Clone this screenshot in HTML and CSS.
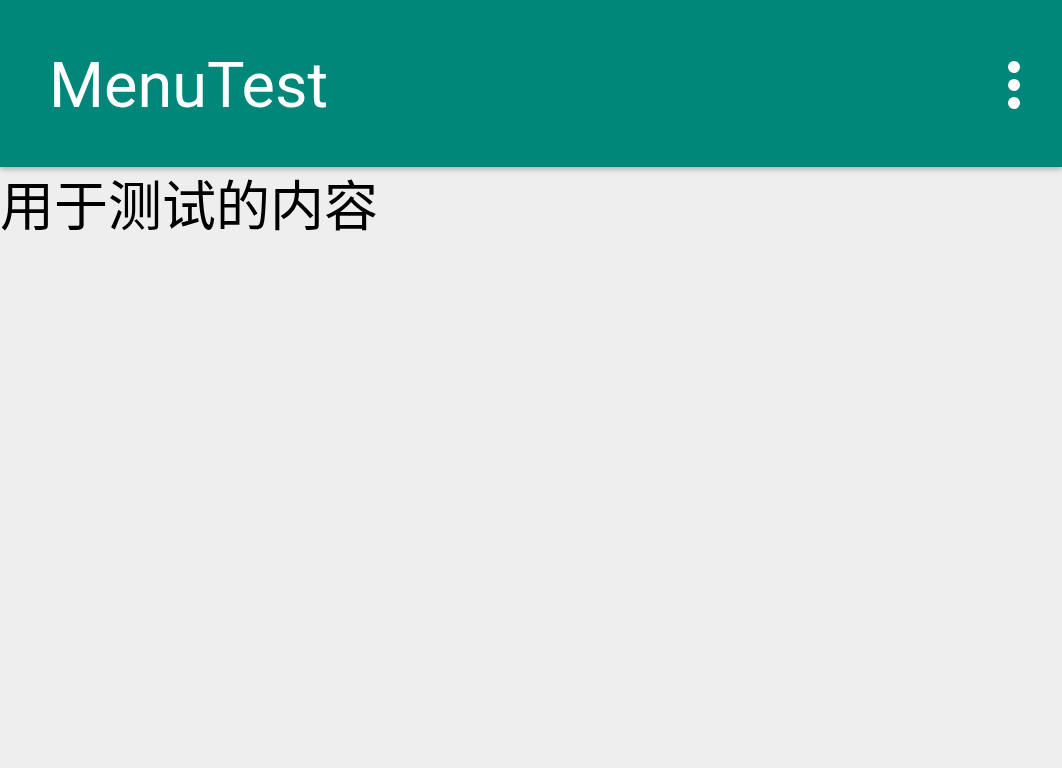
FILE: index.html
```html
<!DOCTYPE html>
<html lang="zh">
<head>
<meta charset="utf-8">
<title>MenuTest</title>
<link rel="stylesheet" href="styles.css">
</head>
<body>
<header class="toolbar">
  <h1 class="title">MenuTest</h1>
  <button class="overflow" aria-label="More options">
    <svg width="12" height="48" viewBox="0 0 12 48"><circle cx="6" cy="6" r="6" fill="#fff"/><circle cx="6" cy="24" r="6" fill="#fff"/><circle cx="6" cy="42" r="6" fill="#fff"/></svg>
  </button>
</header>
<main class="content">
  <p class="text">用于测试的内容</p>
</main>
</body>
</html>
```
FILE: styles.css
```css
html, body {
  margin: 0;
  padding: 0;
  height: 100%;
}
body {
  background: #eeeeee;
  font-family: Roboto, "Noto Sans CJK SC", sans-serif;
  overflow: hidden;
}
.toolbar {
  height: 167px;
  background: #01867a;
  display: flex;
  align-items: center;
  justify-content: space-between;
  padding: 0 42px 0 49px;
  box-sizing: border-box;
  box-shadow: 0 2px 6px rgba(0,0,0,0.3);
  position: relative;
}
.title {
  margin: 0;
  color: #fff;
  font-weight: 400;
  font-size: 63px;
  line-height: 1;
  margin-top: 4px;
}
.overflow {
  background: none;
  border: 0;
  padding: 0;
  display: flex;
  margin-top: 2px;
}
.content {
  padding: 0;
}
.text {
  margin: 0;
  padding-top: 5px;
  font-family: "Noto Sans CJK SC", sans-serif;
  font-size: 54px;
  line-height: 62px;
  color: #000;
}
```
